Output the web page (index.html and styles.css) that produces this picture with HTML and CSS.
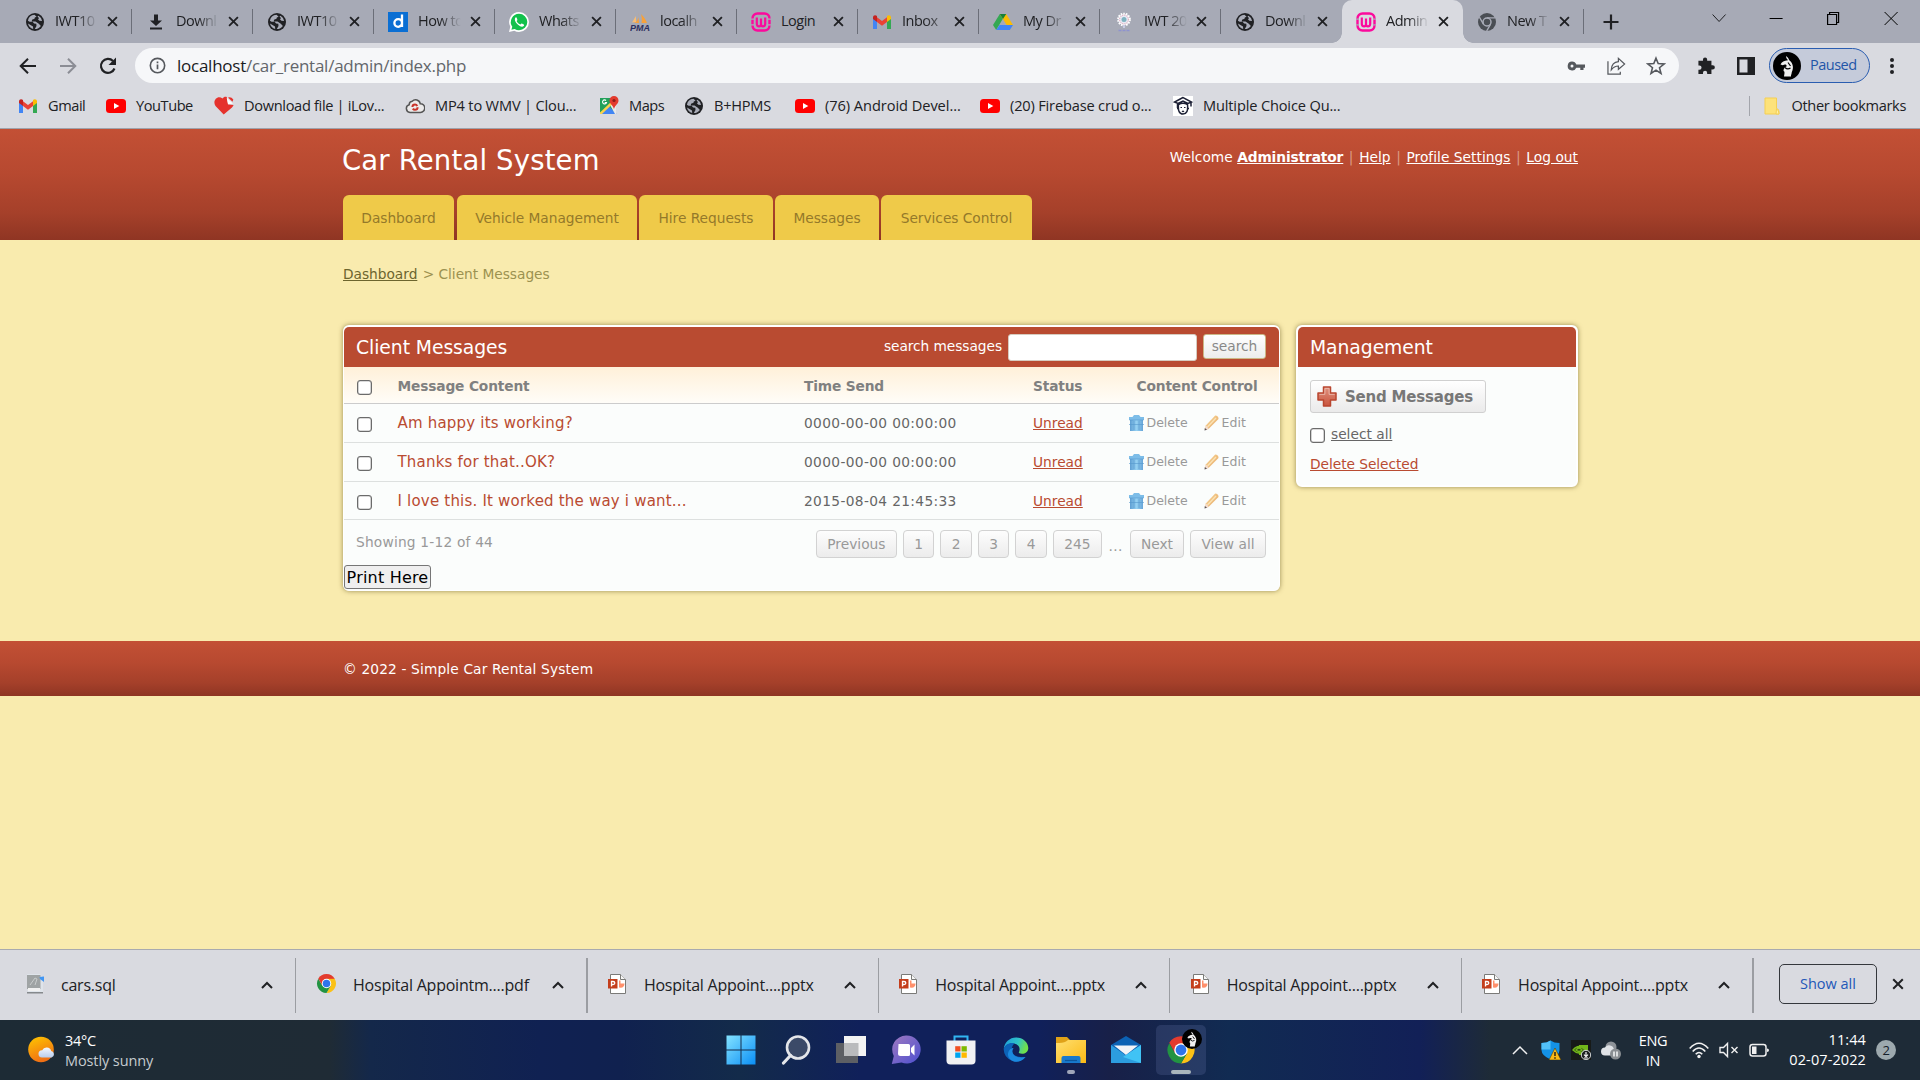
FILE: index.html
```
<!DOCTYPE html>
<html lang="en">
<head>
<meta charset="utf-8">
<title>Admin - Car Rental System</title>
<link rel="stylesheet" href="styles.css">
</head>
<body>
<svg class="defs" aria-hidden="true">
  <defs>
    <linearGradient id="gWin" x1="0" y1="0" x2="1" y2="1"><stop offset="0" stop-color="#84e3ff"/><stop offset="1" stop-color="#0a8ef5"/></linearGradient>
    <linearGradient id="gSun" x1="0" y1="0" x2="0.4" y2="1"><stop offset="0" stop-color="#ffc800"/><stop offset="1" stop-color="#f07014"/></linearGradient>
    <linearGradient id="gCloud" x1="0" y1="0" x2="0" y2="1"><stop offset="0" stop-color="#f4f8ff"/><stop offset="1" stop-color="#b9cdec"/></linearGradient>
    <linearGradient id="gChat" x1="0" y1="0" x2="1" y2="1"><stop offset="0" stop-color="#a07ac0"/><stop offset="1" stop-color="#4b4fd0"/></linearGradient>
    <linearGradient id="gEdge" x1="0" y1="0" x2="1" y2="0.3"><stop offset="0" stop-color="#1e9bdc"/><stop offset="0.6" stop-color="#2fc3c8"/><stop offset="1" stop-color="#6fe04c"/></linearGradient>
    <linearGradient id="gFold" x1="0" y1="0" x2="1" y2="1"><stop offset="0" stop-color="#ffdf70"/><stop offset="1" stop-color="#fbb914"/></linearGradient>
    <linearGradient id="gTrash" x1="0" y1="0" x2="1" y2="0"><stop offset="0" stop-color="#5f9fd3"/><stop offset="0.5" stop-color="#94d0f2"/><stop offset="1" stop-color="#67a5d8"/></linearGradient>
    <linearGradient id="gPencil" x1="0" y1="0" x2="1" y2="1"><stop offset="0" stop-color="#fbdc98"/><stop offset="1" stop-color="#e3a265"/></linearGradient>
    <linearGradient id="gPlus" x1="0" y1="0" x2="0" y2="1"><stop offset="0" stop-color="#e0917f"/><stop offset="1" stop-color="#c9553e"/></linearGradient>
    <symbol id="globe" viewBox="0 0 20 20"><circle cx="10" cy="10" r="9" fill="#202124"/><path fill="#a9acb8" d="M9.500 2.800a7.200 7.200 0 0 0-6.600 6L4.600 9.800h3l1.500 1.700 2.200.3.200 2.100-1.700 3.200A7.200 7.200 0 0 0 15.900 14l-2.100-2.200-3.300-2.400H6.800l.2-1.700 2.500-.9.300-1.400 1.800-.6z"/><path fill="#a9acb8" d="M12.500 4.500 14 6l-1 1.500 1.500 1.300 2.600.2a7.200 7.200 0 0 0-3.600-5.300zM3 11.500a7.200 7.200 0 0 0 5.200 5.400L8 14.500 5.500 13z"/></symbol>
    <symbol id="dl" viewBox="0 0 20 20"><path fill="#202124" d="M8 2.500h4v6h4L10 14 4 8.500h4zM4 15.500h12v2H4z"/></symbol>
    <symbol id="dd" viewBox="0 0 20 20"><path fill="#0b6fd3" d="M0 0h20v20H0z"/><path d="M14 2.500V15M14 11a3.800 3.800 0 1 1-7.600 0 3.800 3.800 0 0 1 7.600 0z" fill="none" stroke="#fff" stroke-width="2.300"/></symbol>
    <symbol id="wa" viewBox="0 0 20 20"><path fill="#fff" d="M10 0a10 10 0 0 1 0 20 10 10 0 0 1-4.700-1.200L0 20l1.300-5.200A10 10 0 0 1 10 0z"/><path fill="#12c14c" d="M10 1.700a8.300 8.300 0 0 1 0 16.600 8.300 8.300 0 0 1-4.400-1.300l-3.200.8.900-3.100A8.300 8.300 0 0 1 10 1.700z"/><path fill="#fff" d="M6.900 5.200c-1.900 1.400-1 4 .9 6.300 2.200 2.500 5.200 4.400 6.900 2.600.8-.9.400-1.500-.4-1.900-1.800-1-1.900-.8-2.800.4-1.700-.5-3.100-1.700-3.900-3.500 1-.9 1-1.200.3-2.800-.3-.9-.6-1.200-1-1.100z"/></symbol>
    <symbol id="pma" viewBox="0 0 20 20"><path fill="#f7a13a" d="M8 1c1 4 .3 8-4 10h5zM11 2c3 3 5 6 6 9h-5.500c.6-3 .3-6-.5-9z"/><path fill="#f9bd73" d="M2 10.500 6 4v6z"/><text x="0" y="19" font-size="8.500" font-weight="700" font-style="italic" font-family="Liberation Sans, sans-serif" fill="#2d3060" textLength="20" lengthAdjust="spacingAndGlyphs">PMA</text></symbol>
    <symbol id="wamp" viewBox="0 0 20 20"><rect x="1.500" y="1.500" width="17" height="17" rx="5" fill="none" stroke="#fb0a9c" stroke-width="2.400"/><path d="M0 7.200h3M0 12.800h3M17 7.200h3M17 12.800h3" stroke="#a9acb8" stroke-width="1.200"/><path d="M5.800 5.500v6.300q0 2.600 2.300 2.600Q10 14.400 10 12V6.500M14.200 5.500v6.300q0 2.600-2.300 2.600Q10 14.400 10 12" fill="none" stroke="#fb0a9c" stroke-width="2.200"/></symbol>
    <symbol id="gm" viewBox="0 0 20 20"><path fill="#4285f4" d="M1 5v12h4V8z"/><path fill="#34a853" d="M15 8v9h4V5z"/><path fill="#ea4335" d="M5 5.300 10 9l5-3.700V10l-5 3.700L5 10z"/><path fill="#c5221f" d="M1 5.500C1 3 3.500 2.600 5 4v6L1 7z"/><path fill="#fbbc04" d="M19 5.500C19 3 16.500 2.600 15 4v6l4-3z"/></symbol>
    <symbol id="gdrive" viewBox="0 0 20 20"><path fill="#34a853" d="M6.800 2 0 13l3.200 5L10 6.500z"/><path fill="#fbbc04" d="M6.800 2h6.400L20 13h-6.400z"/><path fill="#4285f4" d="M6.500 13H20l-3.200 5H3.200z"/><path fill="#188038" d="M6.800 2h6.400L10 7z"/></symbol>
    <symbol id="seal" viewBox="0 0 20 20"><circle cx="10" cy="7.500" r="5.600" fill="#e8e9f4" stroke="#fff" stroke-width="2.500" stroke-dasharray="1.500 1"/><circle cx="10" cy="7.500" r="4.400" fill="none" stroke="#d994a6" stroke-dasharray="1 1"/><circle cx="10" cy="7.500" r="2.500" fill="#7fb3c1"/><path d="M9 13h2v3H9z" fill="#c8cbe4"/><path d="M4.500 18.500h11" stroke="#8e93cf" stroke-width="1.300" stroke-dasharray="3 1"/></symbol>
    <symbol id="chromeg" viewBox="0 0 20 20"><circle cx="10" cy="10" r="9" fill="#4a4e54"/><circle cx="10" cy="10" r="4" fill="none" stroke="#a9acb8" stroke-width="1.500"/><path d="M10 5.800h8M6.400 12.100l-4-7M13.600 12.100l-4 7" stroke="#a9acb8" stroke-width="1.300"/></symbol>
    <symbol id="chrome" viewBox="0 0 20 20"><path fill="#e33b2e" d="M10 10 2.200 5.200a9 9 0 0 1 15.600.3z"/><path fill="#fbc116" d="M10 5.500h7.800A9 9 0 0 1 10 19l3.900-6.700z"/><path fill="#229342" d="M2.200 5.500A9 9 0 0 0 10 19l3.900-6.700L6 12z"/><path fill="#e33b2e" d="M2.200 5.200 6.100 12.200 10 5.500h7.800L10 5z"/><circle cx="10" cy="10" r="4.500" fill="#fff"/><circle cx="10" cy="10" r="3.600" fill="#2f74ea"/></symbol>
    <symbol id="yt" viewBox="0 0 20 20"><rect y="3" width="20" height="14" rx="3.500" fill="#f00"/><path fill="#fff" d="m8 7 5.300 3L8 13z"/></symbol>
    <symbol id="heart" viewBox="0 0 20 20"><path fill="#e5322d" d="M9.700 18.500 1.500 10C-2 5 3.500-1.500 8.500 2.500c1.500-2 3-2 4.300-1.400L14 8.500l5.600.6c-.3 1-1 1.700-1.600 2.300z"/><path fill="#fff" d="M12.700 1.800 19 7.700l-5 .3z"/><path fill="#e5322d" d="m14 1.500 4.500 4.300.8-2.400Q17 .3 14 1.500z"/></symbol>
    <symbol id="cc" viewBox="0 0 20 20"><path d="M5 16.500a4 4 0 0 1-.8-7.800 3.400 3.400 0 0 1 3-3.400 4.600 4.600 0 0 1 8 2.400 4.400 4.400 0 0 1 .3 8.800z" fill="#eceaea" stroke="#555" stroke-width="1.500"/><circle cx="10" cy="11.200" r="2.600" fill="none" stroke="#c9352b" stroke-width="2" stroke-dasharray="6.500 1.600"/></symbol>
    <symbol id="map" viewBox="0 0 20 20"><path fill="#23a05a" d="M1 2h16v16H1z"/><path fill="#4285f4" d="m9.500 10 8 8H2z"/><path fill="#e9e9ea" d="m11 9 6-4v13h-1z"/><path fill="#fbd24c" d="M1 16.500 12 6l1.500 2L3 18H1z"/><path fill="#e33b2e" d="M15 0a4.500 4.500 0 0 1 4.500 4.500C19.500 8 16 9 15 13c-1-4-4.500-5-4.500-8.500A4.500 4.500 0 0 1 15 0z"/><circle cx="15" cy="4.500" r="1.600" fill="#8c1f19"/><path d="M7 4.500a2 2 0 1 0 .5 2H5.700" fill="none" stroke="#fff" stroke-width="1.100"/></symbol>
    <symbol id="mcq" viewBox="0 0 20 20"><path fill="#fff" d="M0 0h20v20H0z"/><path d="M10 1.500 1.500 6 5 7.500 10 5l5 2.500L18.500 6zM4.500 8v4M5.500 8.500Q10 6 14.500 8.500q1 9.500-4.500 9.500T5.500 8.500zM18 6v4.500M4 12.500H5.500M14.500 12.500H16" fill="none" stroke="#1d2136" stroke-width="1.500"/><path d="M7.500 11.500H9M11 11.500h1.500M9 15q1 1 2 0" stroke="#1d2136" stroke-width="1.200" fill="none"/></symbol>
    <symbol id="folder" viewBox="0 0 16 18"><path fill="#fde27a" stroke="#f5cf52" d="M1 1h11.500v10.500q2.500.5 2.500 3v2.500H1z"/><path fill="#fff0a6" stroke="#f5cf52" d="M12.500 12q2.500 1 2.500 5h-3z"/></symbol>
    <symbol id="x" viewBox="0 0 12 12"><path d="m1.200 1.200 9.600 9.600m0-9.600-9.600 9.600" stroke="#202124" stroke-width="2"/></symbol>
    <symbol id="up" viewBox="0 0 12 12"><path d="m1 9 5-5 5 5" fill="none" stroke="#202124" stroke-width="2"/></symbol>
    <symbol id="avatar" viewBox="0 0 28 28"><circle cx="14" cy="14" r="14" fill="#000"/><path fill="#eee" d="M13 4c0 2 1 3 2 4.200C11 8.500 8.800 10 7.500 12.500l2.300.7C12 12 14 12.500 13.500 14.500c-1.500.3-3 2-3 4.500 1.500 0 1 3 .5 5.500h7c-.3-1.500.8-2.500.8-4.500C21 16 20 11 16.500 8.500 15.500 7 15.500 5.500 13 4z"/><path d="M12 15.500q2.500 2.500 5.500.5M15 10.500l2.500 3.500" fill="none" stroke="#000" stroke-width="1.200"/></symbol>
    <symbol id="sql" viewBox="0 0 18 20"><path fill="#dfe4ea" d="M1 0h13l3 4v15H2z"/><path fill="#9fa3a4" d="M1 1h13.500v14H1z"/><path d="m4 11 5-7 2 1-2 6" stroke="#c9cccc" fill="none"/><path fill="#4296f2" d="m13.500 3 4.500-.5V8l-4-3z"/><path fill="#f1f1f1" d="M2 14h12v3H2z"/><path fill="#85898c" d="M1 18h16v1.500H1z"/></symbol>
    <symbol id="ppt" viewBox="0 0 18 20"><path fill="#fff" stroke="#7a7a78" d="M2.500.5h10l5 5v14h-15z"/><path fill="#f6f6f6" stroke="#7a7a78" d="M12.500.5v5h5"/><path fill="#ff8f6b" d="M11 6.500v7q5.500 1 5.500-4H12.500V6.500z"/><path fill="#c43e1c" d="M0 5h9.500v9.500H0z"/><path d="M3.500 12.500v-5H5q1.800 0 1.800 1.500T5 10.500H3.500" fill="none" stroke="#fff" stroke-width="1.300"/></symbol>
    <symbol id="trash" viewBox="0 0 15 16"><path fill="#7dbde8" d="M5 0h5l1.500 2H15v3H0V2h3.500z"/><path fill="url(#gTrash)" d="M1 5h13v11H1z"/><path stroke="#5598cc" stroke-width=".6" fill="none" d="M.4 5h14.200M5 6v9M10 6v9M0 9.500h15"/></symbol>
    <symbol id="pencil" viewBox="0 0 15 16"><path fill="url(#gPencil)" d="M11.200.5Q14.500.5 14.500 4l-10 10-3.500 1 .8-4.500z"/><path d="m3.500 12 8.500-9" stroke="#fbe3b4" stroke-width="1.400"/><path fill="#f3dcd0" d="m1.800 10.300 3 3.500-3.300 1.100z"/><path fill="#5c5357" d="m.8 13-.3 2.500 2.500-.8z"/></symbol>
    <symbol id="plus" viewBox="0 0 20 21"><path d="M6.500 1h7v6H19v7h-5.500v6h-7v-6H1V7h5.500z" fill="url(#gPlus)" stroke="#b9462f" stroke-width="1.500" stroke-linejoin="round"/><path d="M7.900 2.400h4.200v6h5.500M2.400 8.400h5.500v-6" fill="none" stroke="#ecc0b4" stroke-width=".8"/></symbol>
  </defs>
</svg>

<div class="tabstrip">
  <div class="tab"><svg class="fav"><use href="#globe"/></svg><span class="tt">IWT10</span><svg class="cl"><use href="#x"/></svg></div>
  <div class="tab"><svg class="fav"><use href="#dl"/></svg><span class="tt">Downl</span><svg class="cl"><use href="#x"/></svg></div>
  <div class="tab"><svg class="fav"><use href="#globe"/></svg><span class="tt">IWT10</span><svg class="cl"><use href="#x"/></svg></div>
  <div class="tab"><svg class="fav"><use href="#dd"/></svg><span class="tt">How to</span><svg class="cl"><use href="#x"/></svg></div>
  <div class="tab"><svg class="fav"><use href="#wa"/></svg><span class="tt">Whats</span><svg class="cl"><use href="#x"/></svg></div>
  <div class="tab"><svg class="fav"><use href="#pma"/></svg><span class="tt">localh</span><svg class="cl"><use href="#x"/></svg></div>
  <div class="tab"><svg class="fav"><use href="#wamp"/></svg><span class="tt full">Login</span><svg class="cl"><use href="#x"/></svg></div>
  <div class="tab"><svg class="fav"><use href="#gm"/></svg><span class="tt soft">Inbox</span><svg class="cl"><use href="#x"/></svg></div>
  <div class="tab"><svg class="fav"><use href="#gdrive"/></svg><span class="tt">My Dr</span><svg class="cl"><use href="#x"/></svg></div>
  <div class="tab"><svg class="fav"><use href="#seal"/></svg><span class="tt">IWT 20</span><svg class="cl"><use href="#x"/></svg></div>
  <div class="tab last"><svg class="fav"><use href="#globe"/></svg><span class="tt">Downl</span><svg class="cl"><use href="#x"/></svg></div>
  <div class="tab active"><svg class="fav"><use href="#wamp"/></svg><span class="tt">Admin</span><svg class="cl"><use href="#x"/></svg></div>
  <div class="tab"><svg class="fav"><use href="#chromeg"/></svg><span class="tt">New T</span><svg class="cl"><use href="#x"/></svg></div>
  <svg class="newtab" viewBox="0 0 16 16"><path d="M8 .5v15M.5 8h15" stroke="#202124" stroke-width="2.200"/></svg>
  <div class="winctl">
    <svg viewBox="0 0 16 16"><path d="m1.500 4.500 6.500 7 6.500-7" fill="none" stroke="#202124"/></svg>
    <svg viewBox="0 0 16 16"><path d="M1.500 8.500h13" stroke="#000"/></svg>
    <svg viewBox="0 0 16 16"><path d="M2.500 4.500h9v10h-9zM4.500 4.500v-2h9v10h-2" fill="none" stroke="#000" stroke-width="1.200"/></svg>
    <svg viewBox="0 0 16 16"><path d="m1.500 2 13 13m0-13-13 13" stroke="#000"/></svg>
  </div>
</div>

<div class="toolbar">
  <svg class="tb back" viewBox="0 0 18 18"><path d="M17 9H2M9 1.700 1.700 9 9 16.300" fill="none" stroke="#202124" stroke-width="2"/></svg>
  <svg class="tb fwd" viewBox="0 0 18 18"><path d="M1 9h15M9 1.700 16.300 9 9 16.300" fill="none" stroke="#8b8d95" stroke-width="2"/></svg>
  <svg class="tb rel" viewBox="0 0 18 18"><path d="M15.500 11.500A7 7 0 1 1 14 4" fill="none" stroke="#202124" stroke-width="2.200"/><path d="M17 .5V8H9.500z" fill="#202124"/></svg>
  <div class="omni">
    <svg class="info" viewBox="0 0 18 18"><circle cx="9" cy="9" r="7.600" fill="none" stroke="#55585d" stroke-width="1.700"/><path d="M9 8v5M9 4.800v1.800" stroke="#55585d" stroke-width="1.800"/></svg>
    <span class="url"><b>localhost</b>/car_rental/admin/index.php</span>
    <svg class="oi key" viewBox="0 0 18 18"><path fill="#55585d" fill-rule="evenodd" d="M5 4.500a4.500 4.500 0 0 1 4.300 3H18v3.300h-1.500V13h-3.200v-2.200h-4A4.500 4.500 0 1 1 5 4.500zm0 3a1.500 1.500 0 1 0 0 3 1.500 1.500 0 0 0 0-3z"/></svg>
    <svg class="oi share" viewBox="0 0 20 20"><path d="M1 5v13.500h13V16M4.500 14q.5-8 7.500-8.500V2l6.500 6L12 13.500V10Q7.500 10 4.500 14z" fill="none" stroke="#55585d" stroke-width="1.300"/></svg>
    <svg class="oi star" viewBox="0 0 20 20"><path d="m10 2.200 2.200 5.400 5.800.4-4.500 3.700 1.500 5.700-5-3.200-5 3.200 1.500-5.700L2 8l5.800-.4z" fill="none" stroke="#55585d" stroke-width="1.600"/></svg>
  </div>
  <svg class="puz" viewBox="0 0 20 20"><path fill="#202124" d="M8.500 1a2.200 2.200 0 0 1 2.200 2.200V4.500h4.500v4.600h1.300a2.300 2.300 0 0 1 0 4.600h-1.300V18.500h-4.500v-1.300a2.200 2.200 0 0 0-4.400 0v1.300H1.500V14h1a2.300 2.300 0 0 0 0-4.600h-1V4.500h4.800V3.200A2.200 2.200 0 0 1 8.500 1z"/></svg>
  <svg class="side" viewBox="0 0 18 18"><path fill="#202124" fill-rule="evenodd" d="M0 0h18v18H0zM2.500 2.500v13h8v-13z"/></svg>
  <div class="paused"><svg><use href="#avatar"/></svg><span>Paused</span></div>
  <svg class="dots" viewBox="0 0 6 18"><circle cx="3" cy="3" r="2" fill="#202124"/><circle cx="3" cy="9" r="2" fill="#202124"/><circle cx="3" cy="15" r="2" fill="#202124"/></svg>
</div>

<div class="bookmarks">
  <div class="bm w1"><svg><use href="#gm"/></svg><span>Gmail</span></div>
  <div class="bm w2"><svg><use href="#yt"/></svg><span>YouTube</span></div>
  <div class="bm w3"><svg><use href="#heart"/></svg><span>Download file | iLov...</span></div>
  <div class="bm w4"><svg><use href="#cc"/></svg><span>MP4 to WMV | Clou...</span></div>
  <div class="bm w5"><svg><use href="#map"/></svg><span>Maps</span></div>
  <div class="bm w6"><svg><use href="#globe"/></svg><span>B+HPMS</span></div>
  <div class="bm w7"><svg><use href="#yt"/></svg><span>(76) Android Devel...</span></div>
  <div class="bm w8"><svg><use href="#yt"/></svg><span>(20) Firebase crud o...</span></div>
  <div class="bm w9"><svg><use href="#mcq"/></svg><span>Multiple Choice Qu...</span></div>
  <div class="other"><svg><use href="#folder"/></svg><span>Other bookmarks</span></div>
</div>

<main class="page">
  <header class="hd">
    <div class="wrap">
      <div class="top">
        <h1>Car Rental System</h1>
        <p class="user">Welcome <a class="adm">Administrator</a><i>|</i><a>Help</a><i>|</i><a>Profile Settings</a><i>|</i><a>Log out</a></p>
      </div>
      <nav><a class="n1">Dashboard</a><a class="n2">Vehicle Management</a><a class="n3">Hire Requests</a><a class="n4">Messages</a><a class="n5">Services Control</a></nav>
    </div>
  </header>
  <div class="wrap crumb"><a>Dashboard</a> &gt; Client Messages</div>
  <div class="wrap cols">
    <section class="box list">
      <div class="bh"><h2>Client Messages</h2><span class="sl">search messages</span><input class="q" type="text"><button class="sb">search</button></div>
      <div class="row th"><input type="checkbox"><b>Message Content</b><b>Time Send</b><b>Status</b><b class="ctl">Content Control</b></div>
      <div class="row"><input type="checkbox"><a class="msg">Am happy its working?</a><span class="time">0000-00-00 00:00:00</span><a class="st">Unread</a><span class="act"><svg><use href="#trash"/></svg><em>Delete</em><svg><use href="#pencil"/></svg><em>Edit</em></span></div>
      <div class="row"><input type="checkbox"><a class="msg">Thanks for that..OK?</a><span class="time">0000-00-00 00:00:00</span><a class="st">Unread</a><span class="act"><svg><use href="#trash"/></svg><em>Delete</em><svg><use href="#pencil"/></svg><em>Edit</em></span></div>
      <div class="row end"><input type="checkbox"><a class="msg">I love this. It worked the way i want...</a><span class="time">2015-08-04 21:45:33</span><a class="st">Unread</a><span class="act"><svg><use href="#trash"/></svg><em>Delete</em><svg><use href="#pencil"/></svg><em>Edit</em></span></div>
      <div class="pg"><span class="show">Showing 1-12 of 44</span><a class="p1">Previous</a><a class="p2">1</a><a class="p2">2</a><a class="p2">3</a><a class="p2">4</a><a class="p3">245</a><span class="el">...</span><a class="p4">Next</a><a class="p5">View all</a></div>
      <button class="print">Print Here</button>
    </section>
    <aside class="box mg">
      <div class="bh"><h2>Management</h2></div>
      <div class="mb">
        <a class="send"><svg><use href="#plus"/></svg>Send Messages</a>
        <div class="sa"><input type="checkbox"><a>select all</a></div>
        <a class="del">Delete Selected</a>
      </div>
    </aside>
  </div>
  <footer><div class="wrap">© 2022 - Simple Car Rental System</div></footer>
</main>

<div class="shelf">
  <div class="dlf"><svg class="fi"><use href="#sql"/></svg><span>cars.sql</span><svg class="up"><use href="#up"/></svg></div>
  <div class="dlf thick"><svg class="fi"><use href="#chrome"/></svg><span>Hospital Appointm....pdf</span><svg class="up"><use href="#up"/></svg></div>
  <div class="dlf"><svg class="fi"><use href="#ppt"/></svg><span>Hospital Appoint....pptx</span><svg class="up"><use href="#up"/></svg></div>
  <div class="dlf"><svg class="fi"><use href="#ppt"/></svg><span>Hospital Appoint....pptx</span><svg class="up"><use href="#up"/></svg></div>
  <div class="dlf"><svg class="fi"><use href="#ppt"/></svg><span>Hospital Appoint....pptx</span><svg class="up"><use href="#up"/></svg></div>
  <div class="dlf thick"><svg class="fi"><use href="#ppt"/></svg><span>Hospital Appoint....pptx</span><svg class="up"><use href="#up"/></svg></div>
  <button class="all">Show all</button>
  <svg class="sx"><use href="#x"/></svg>
</div>

<div class="taskbar">
  <div class="weather">
    <svg viewBox="0 0 28 28"><circle cx="13" cy="13.500" r="12.800" fill="url(#gSun)"/><path d="M14 21.500a3.600 3.600 0 0 1 .2-7.200 4.800 4.800 0 0 1 9 .8 3.300 3.300 0 0 1 .5 6.400z" fill="url(#gCloud)"/></svg>
    <div><span>34°C</span><span class="dim">Mostly sunny</span></div>
  </div>
  <div class="apps">
    <svg viewBox="0 0 30 30"><path fill="url(#gWin)" d="M.5.5h14v14H.5zM15.500.5h14v14h-14zM.5 15.500h14v14H.5zM15.500 15.500h14v14h-14z"/></svg>
    <svg viewBox="0 0 30 30"><circle cx="17" cy="12.500" r="11" fill="#3b4a68" stroke="#e4e6ea" stroke-width="2.600"/><path d="m9.500 20.500-7 7.500" stroke="#e4e6ea" stroke-width="3.200" stroke-linecap="round"/></svg>
    <svg viewBox="0 0 30 30"><path fill="#5d5f64" d="M0 8h22v20H0z"/><path fill="#f3f3f3" d="M8 1h22v20H8z"/><path fill="#babbbd" d="M8 8h14.500v13H8z"/></svg>
    <svg viewBox="0 0 30 30"><path fill="url(#gChat)" d="M15 .5a14 14 0 1 1-4.500 27L.8 29l2-8A14 14 0 0 1 15 .5z"/><path fill="#fff" d="M7.500 9h10q1.500 0 1.500 1.500v9q0 1.500-1.500 1.500h-8Q7 21 7 18.500zM20 13l3.500-3.500v11L20 17z"/></svg>
    <svg viewBox="0 0 30 30"><path d="M8.500 7V1.500h13V7" fill="none" stroke="#31b5f2" stroke-width="2"/><path fill="#f1f1f3" d="M.5 5.500h29v20q0 4-4 4h-21q-4 0-4-4z"/><path fill="#f25022" d="M9.200 11.200h5.300v5.300H9.200z"/><path fill="#7fba00" d="M15.500 11.200h5.300v5.300h-5.300z"/><path fill="#00a4ef" d="M9.200 17.500h5.300v5.300H9.200z"/><path fill="#ffb900" d="M15.500 17.500h5.300v5.300h-5.300z"/></svg>
    <svg viewBox="0 0 30 30"><path fill="url(#gEdge)" d="M2.800 14A12.300 12.300 0 0 1 15 2.500c7 0 12.300 5 12.300 10.500 0 5-5.500 7-9.500 5 0-1 .8-1.500.8-4 0-7-13-7.500-15.800 0z"/><path fill="#0c62b8" d="M2.700 14.500C4 9 9.500 7 13.500 8.500c-5.500 5-3.500 15.500 11 13.500A12.400 12.400 0 0 1 2.700 14.500z"/><path fill="#1b88de" d="M12.500 13c-3 5 0 11 12 9-9 11-22 1-16-7 1-1.500 3-2 4-2z"/></svg>
    <div class="run"><svg viewBox="0 0 30 30"><path fill="#e0a218" d="M0 2h11l3 3v8H0z"/><path fill="url(#gFold)" d="M0 8q7 0 10-1.500l2-1.500h18v23H0z"/><path fill="#1879cc" d="M5.500 28v-5q0-2 2-2h15q2 0 2 2v5z"/><path d="M9 25.500h12" stroke="#0c569b" stroke-width="1.200"/></svg><i></i></div>
    <svg viewBox="0 0 30 30"><path fill="#0c62b4" d="M0 10 15 1l15 9v10H0z"/><path fill="#f2f4f7" d="M3 10.500h24L15 20z"/><path fill="#2c9ddf" d="M0 10l15 10.500L30 10v18H0z"/><path fill="#40c3f5" d="M30 10 12 22l18 6z"/></svg>
    <div class="run cur"><svg viewBox="0 0 20 20"><use href="#chrome"/></svg><svg class="mini"><use href="#avatar"/></svg><i></i></div>
  </div>
  <div class="tray">
    <svg class="tc" viewBox="0 0 16 10"><path d="m1 9 7-7 7 7" fill="none" stroke="#f0f0f0" stroke-width="1.500"/></svg>
    <svg class="ti" viewBox="0 0 20 20"><path fill="#1492e6" d="M9.500.5Q13 3 18.500 3v7q0 5.500-9 9.500Q.5 15.500.5 10V3Q6 3 9.500.5z"/><path fill="#53c2fa" d="M9.500.5v9H.5V3Q6 3 9.500.5z"/><path fill="#f9b916" stroke="#3a2b00" stroke-width=".5" d="M14 8l6 12H8z"/><path d="M14 12v4M14 17.300v1.400" stroke="#1a1a1a" stroke-width="1.400"/></svg>
    <svg class="ti" viewBox="0 0 20 20"><path fill="#171a18" d="M0 0h20v20H0z"/><path fill="#73b81a" d="M8 5h9v10H8z"/><path d="M2 10q6-7 12 0-6 6-12 0zM5 10q3-4 6 0-3 3-6 0z" fill="#2d4214" stroke="#73b81a" stroke-width="1.300"/><circle cx="15" cy="15" r="4.700" fill="#1c1f21" stroke="#d5d8da"/><path d="M15 12v4.500m-2-1.800 2 2 2-2M13 18h4" stroke="#f4f4f4" fill="none" stroke-width="1.200"/></svg>
    <svg class="ti" viewBox="0 0 20 20"><circle cx="10" cy="7" r="5.500" fill="#8d9298"/><path fill="#dfe2e6" d="M4 15.500a4 4 0 0 1 0-8 5 5 0 0 1 9 2v6z"/><circle cx="14.500" cy="14" r="5.500" fill="#8a8e92"/><path d="M13 11.500v5M16 11.500v5" stroke="#fff" stroke-width="1.400"/></svg>
    <div class="lang"><span>ENG</span><span>IN</span></div>
    <svg class="ti wifi" viewBox="0 0 20 20"><path d="M.7 8.500Q10-2 19.300 8.500M3.700 11.500q6.300-7 12.600 0M6.700 14.300q3.300-3.600 6.600 0" fill="none" stroke="#f0f0f0" stroke-width="1.600"/><circle cx="10" cy="16.500" r="1.700" fill="#f0f0f0"/></svg>
    <svg class="ti" viewBox="0 0 20 20"><path d="M1 7.500h3.500L8.500 3.500v13l-4-4H1zM12.500 7l6 6m0-6-6 6" fill="none" stroke="#f0f0f0" stroke-width="1.400"/></svg>
    <svg class="ti" viewBox="0 0 20 20"><rect x="1" y="4.500" width="16" height="11.500" rx="2.500" fill="none" stroke="#f0f0f0" stroke-width="1.500"/><path fill="#f0f0f0" d="M3 6.500h4.500V14H3zM18 8.500q2 0 2 1.700T18 12z"/></svg>
    <div class="clock"><span>11:44</span><span>02-07-2022</span></div>
    <b class="badge">2</b>
  </div>
</div>
</body>
</html>
```
FILE: styles.css
```
* { box-sizing: border-box; }
html, body { margin: 0; height: 1080px; overflow: hidden; }
body {
  display: flex; flex-direction: column; width: 1920px;
  font-family: "Open Sans", "Noto Sans", sans-serif; font-size: 15px; color: #202124;
  background: #d9dae0;
}
svg { display: block; flex: none; }
.defs { position: absolute; width: 0; height: 0; }
span { white-space: nowrap; }

/* browser tabs */
.tabstrip { display: flex; height: 43px; background: #a7aab6; padding-left: 11px; flex: none; }
.tab { position: relative; display: flex; align-items: center; width: 121px; padding-left: 14px; flex: none; height: 43px; }
.tab::after { content: ""; position: absolute; right: 0; top: 9px; width: 1px; height: 25px; background: #6b6e78; }
.tab.last::after, .tab.active::after { display: none; }
.fav { width: 20px; height: 20px; margin-right: 10px; }
.tt { width: 43px; font-size: 14.500px; letter-spacing: -.5px; line-height: 22px; flex: none; margin: 0 9px 1px 0;
  -webkit-mask-image: linear-gradient(90deg, #000 50%, transparent 100%); mask-image: linear-gradient(90deg, #000 50%, transparent 100%); }
.tt.soft { -webkit-mask-image: linear-gradient(90deg, #000 50%, transparent 130%); mask-image: linear-gradient(90deg, #000 50%, transparent 130%); }
.tt.full { -webkit-mask-image: none; mask-image: none; }
.cl { width: 11px; height: 11px; }
.tab.active { background: #d9dae0; border-radius: 10px 10px 0 0; }
.tab.active::before { content: ""; position: absolute; left: -10px; right: -10px; bottom: 0; height: 10px;
  background: radial-gradient(circle at 0 0, transparent 9.500px, #d9dae0 10px) left/10px 10px no-repeat,
              radial-gradient(circle at 100% 0, transparent 9.500px, #d9dae0 10px) right/10px 10px no-repeat; }
.newtab { width: 16px; height: 16px; margin: 14px 0 0 19px; }
.winctl { display: flex; gap: 41px; margin: 10px 0 0 92px; }
.winctl svg { width: 16.200px; height: 16px; }

/* toolbar */
.toolbar { display: flex; align-items: center; height: 45px; flex: none; background: #d9dae0; padding-left: 19px; }
.tb { width: 18px; height: 18px; margin-right: 22px; }
.rel { margin-right: 18px; }
.omni { display: flex; align-items: center; width: 1544px; height: 35px; border-radius: 18px; background: #f6f7f9; padding: 0 13px 0 14px; }
.info { width: 17px; height: 17px; margin-right: 11px; }
.url { flex: 1; font-size: 17px; letter-spacing: -.25px; color: #63666b; line-height: 24px; }
.url b { font-weight: 400; color: #1a1b1e; }
.key { width: 18px; height: 18px; margin-right: 22px; }
.share { width: 19px; height: 20px; margin-right: 20px; }
.star { width: 20px; height: 20px; }
.puz { width: 19px; height: 20px; margin-left: 18px; }
.side { width: 18px; height: 18px; margin-left: 21px; }
.paused { display: flex; align-items: center; width: 101px; height: 35px; margin-left: 14px; border: 1px solid #2a5db0; border-radius: 18px; background: #c5cbda; color: #2255a8; padding-left: 3px; font-size: 14.500px; letter-spacing: -.5px; flex: none; }
.paused svg { width: 28px; height: 28px; margin-right: 9px; }
.paused span { margin-bottom: 2px; }
.dots { width: 6px; height: 18px; margin-left: 19px; }

/* bookmarks bar */
.bookmarks { display: flex; align-items: center; height: 41px; flex: none; border-bottom: 1px solid #9fa2ab; padding: 0 14px 5px 18px; letter-spacing: -.45px; font-size: 14.600px; }
.bookmarks span { margin-bottom: 2px; }
.bm { display: flex; align-items: center; gap: 10px; flex: none; }
.bm svg { width: 20px; height: 20px; }
.w1 { width: 88px; } .w2 { width: 108px; }
.w3 { width: 191px; letter-spacing: -.33px; }
.w4 { width: 194px; letter-spacing: -.17px; }
.w5 { width: 85px; }
.w6 { width: 111px; letter-spacing: -.25px; }
.w7 { width: 185px; letter-spacing: -.05px; }
.w8 { width: 193px; letter-spacing: -.17px; }
.w9 { width: 180px; letter-spacing: -.15px; }
.other { display: flex; align-items: center; margin-left: auto; border-left: 1px solid #a3a5ac; height: 20px; padding-left: 14px; gap: 11px; letter-spacing: -.35px; }
.other svg { width: 16px; height: 18px; }

/* site */
.page { flex: none; height: 820px; background: #f9ebae; font-family: "DejaVu Sans", Verdana, sans-serif; font-size: 13.750px; color: #9c9250; line-height: 20px; }
.wrap { width: 1235px; margin-left: 343px; }
.hd { height: 111px; background: linear-gradient(#c35035, #b74930 40%, #a5402a 76%, #8f3523); }
.hd .wrap { height: 111px; display: flex; flex-direction: column; justify-content: space-between; }
.top { display: flex; justify-content: space-between; }
h1 { margin: 13px 0 0 -1px; font-size: 27.500px; line-height: 36px; font-weight: 400; color: #fff; letter-spacing: .16px; }
.user { margin: 18px 0 0; color: #fff; white-space: nowrap; letter-spacing: .03px; }
.user a { text-decoration: underline; }
.user i { font-style: normal; color: #db9a83; margin: 0 5.600px; }
.adm { font-weight: 700; letter-spacing: -.12px; }
nav { display: flex; height: 45px; }
nav a { height: 45px; line-height: 47px; background: #efca49; color: #94792a; border-radius: 6px 6px 0 0; text-align: center; letter-spacing: -.03px; }
.n1 { width: 111px; margin-right: 3px; } .n2 { width: 180px; margin-right: 2px; } .n3 { width: 134px; margin-right: 2px; }
.n4 { width: 104px; margin-right: 2px; } .n5 { width: 151px; }
.crumb { padding-top: 24px; height: 85px; letter-spacing: -.03px; }
.crumb a { color: #6d652e; text-decoration: underline; margin-right: 1px; }
.cols { display: flex; justify-content: space-between; align-items: flex-start; height: 316px; }
.box { background: #fbfdfc; border: 1px solid #fff; border-top-width: 2px; border-radius: 6px; box-shadow: 0 0 5px rgba(90, 75, 20, .6); color: #666; }
.list { width: 937px; height: 266px; }
.mg { width: 282px; height: 162px; border-width: 2px; }
.bh { display: flex; align-items: center; height: 40px; background: #b94b31; border-radius: 5px 5px 0 0; padding: 0 13px 0 12px; color: #fff; }
h2 { margin: 2px auto 0 0; font-size: 18.750px; font-weight: 400; line-height: 24px; letter-spacing: -.06px; }
.sl { margin: 0 6px 2px 0; letter-spacing: -.06px; }
.q { width: 189px; height: 27px; border: 1px solid #d6cbbf; border-radius: 3px; background: #fff; margin: 0 6px 0 0; }
.sb { width: 63px; height: 25px; padding: 0; border: 1px solid #cbb887; border-radius: 3px; background: linear-gradient(#fff, #ececec); color: #888; font: 13.750px "DejaVu Sans", sans-serif; margin-bottom: 2px; }
.row { display: grid; grid-template-columns: 40.500px 406.500px 229px 95.500px 1fr; align-items: center; height: 39px; padding-left: 13px; border-bottom: 1px solid #dde0df; }
.row.end { height: 38px; }
.row.th { height: 37px; padding-top: 2px; background: linear-gradient(#fff0d9, #fffdf8); border-bottom-color: #ccc; color: #808080; letter-spacing: -.15px; }
.th .ctl { padding-left: 8px; }
input[type="checkbox"] { appearance: none; width: 15px; height: 15px; margin: 3px 0 0; border: 1px solid #6b6b6b; border-radius: 3px; background: #fff; box-shadow: inset 0 0 0 .3px #6b6b6b; }
.row input[type="checkbox"] { margin-left: -.5px; }
.msg { color: #b94b31; font-size: 15px; letter-spacing: .2px; }
.time { letter-spacing: .35px; }
.st { color: #b94b31; text-decoration: underline; }
.act { display: flex; align-items: center; font-size: 12.500px; color: #999; }
.act svg { width: 15px; height: 16px; }
.act em { font-style: normal; margin: 0 16px 0 3px; }
.pg { display: flex; padding: 10px 13px 0 12px; height: 45px; color: #999; }
.show { margin-right: auto; line-height: 24px; letter-spacing: .2px; }
.pg a { height: 28px; line-height: 27px; text-align: center; border: 1px solid #d2d2d2; border-radius: 4px; background: linear-gradient(#fdfdfd, #ececec); color: #999; margin-left: 6px; }
.p1 { width: 81px; } .p2 { width: 31.500px; } .p3 { width: 49px; } .p4 { width: 54px; } .p5 { width: 76px; }
.el { line-height: 32px; margin: 0 1px 0 6.500px; letter-spacing: .5px; }
.print { display: block; width: 87px; height: 24px; padding: 2px 0 0; border: 1px solid #767676; border-radius: 3px; background: #efefef; color: #000; font: 16px "DejaVu Sans", sans-serif; line-height: 20px; letter-spacing: .2px; }
.mb { padding: 13px 12px; }
.send { display: flex; align-items: center; width: 176px; height: 33px; border: 1px solid #d0d0d0; border-radius: 3px; background: linear-gradient(#fff, #eaeaea); font-weight: 700; font-size: 15px; color: #777; padding-left: 6px; letter-spacing: -.2px; }
.send svg { width: 20px; height: 21px; margin-right: 8px; }
.sa { display: flex; align-items: center; gap: 6px; height: 20px; margin-top: 11px; }
.sa a { color: #666; text-decoration: underline; }
.del { display: block; margin-top: 10px; color: #b94b31; text-decoration: underline; letter-spacing: -.05px; }
footer { height: 55px; background: linear-gradient(#c35035, #b74930 40%, #a5402a 76%, #8f3523); color: #fff; line-height: 56px; letter-spacing: .14px; }

/* download shelf */
.shelf { display: flex; height: 71px; flex: none; border-top: 1px solid #a8aaaf; background: #d9dae0; }
.dlf { position: relative; display: flex; align-items: center; width: 291.400px; padding: 0 23px 0 24.500px; flex: none; }
.dlf:first-child { width: 296px; padding-left: 26px; }
.dlf::after { content: ""; position: absolute; right: 0; top: 8px; width: 1px; height: 55px; background: #9b9da2; }
.dlf.thick::after { width: 2px; right: -1px; }
.dlf:nth-child(2) { padding-left: 20px; }
.fi { width: 18px; height: 20px; margin: 0 17px 3px 0; }
.dlf:nth-child(2) .fi { width: 21px; height: 21px; margin-right: 16px; }
.dlf:nth-child(n+3) .fi { margin: 0 18px 3px -4px; }
.dlf span { flex: 1; font-size: 16px; letter-spacing: -.22px; }
.up { width: 12px; height: 12px; }
.all { width: 98px; height: 40px; margin: 14px 0 0 26px; border: 1px solid #34373c; border-radius: 5px; background: transparent; color: #2257b8; font: 400 14.500px "Open Sans", sans-serif; padding: 0 0 2px; }
.sx { width: 12px; height: 12px; margin: 28px 0 0 15px; }

/* taskbar */
.taskbar { display: grid; grid-template-columns: 725.500px 480px 1fr; height: 60px; flex: none; color: #fff; font-size: 14.500px; line-height: 20px; letter-spacing: -.3px;
  background: linear-gradient(90deg, #1d2b35 0, #1f2b35 330px, #14284a 370px, #102152 540px, #10214f 620px, #132b4a 740px, #10205a 860px, #10205a 1040px, #182048 1110px, #112b52 1230px, #122057 1420px, #1e2b37 1490px, #1e2b37 100%); }
.weather { display: flex; align-items: center; padding-left: 28px; gap: 9px; }
.weather svg { width: 28px; height: 28px; }
.weather div, .lang, .clock { padding-top: 2px; }
.weather span, .clock span, .lang span { display: block; }
.dim { color: #c6cbd0; letter-spacing: -.1px; }
.apps { display: flex; align-items: center; gap: 25px; height: 60px; }
.apps > svg, .apps .run > svg:first-child { width: 30px; height: 30px; }
.run { position: relative; }
.run i { position: absolute; left: 11px; bottom: -9px; width: 8px; height: 4px; border-radius: 2px; background: #9fa6ba; }
.run.cur { width: 50px; height: 50px; margin-left: -10px; padding: 10px; border-radius: 5px; background: rgba(120, 135, 190, .2); }
.run.cur i { left: 15px; bottom: 1px; width: 20px; background: #a9b6bc; }
.run.cur .mini { position: absolute; right: 4px; top: 4px; width: 20px; height: 20px; }
.tray { display: flex; align-items: center; padding-left: 306.500px; }
.tc { width: 16px; height: 10px; margin-right: 13px; }
.ti { width: 20px; height: 20px; margin-right: 10px; }
.lang { width: 30px; text-align: center; margin: 0 21px 0 7px; }
.clock { width: 87px; text-align: right; letter-spacing: .1px; padding-top: 0; }
.badge { width: 20px; height: 20px; margin-left: 10px; border-radius: 50%; background: #9da9ae; color: #15202a; font-weight: 400; font-size: 13px; text-align: center; }
```
